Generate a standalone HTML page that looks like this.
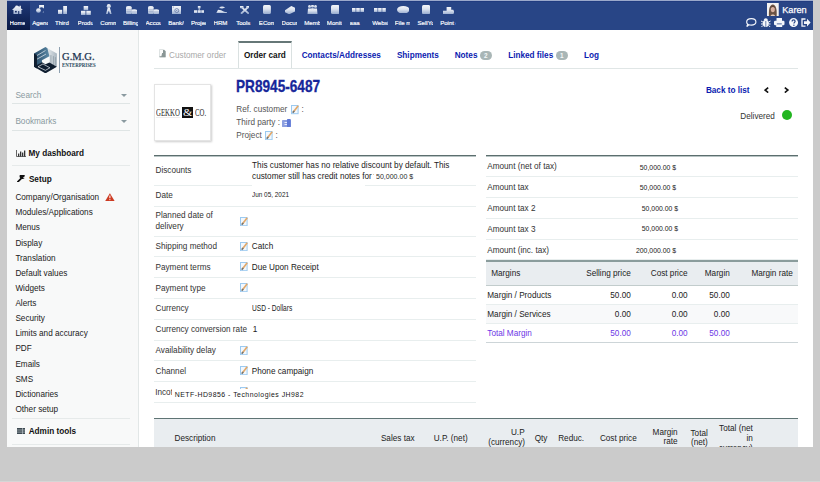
<!DOCTYPE html><html><head><meta charset="utf-8"><style>html,body{margin:0;padding:0;}body{width:820px;height:482px;background:#cbcbcb;position:relative;overflow:hidden;font-family:"Liberation Sans",sans-serif}div{box-sizing:border-box}</style></head><body>
<div style="position:absolute;left:7px;top:0px;width:806px;height:447px;background:#fff"></div>
<div style="position:absolute;left:7px;top:0px;width:806px;height:1px;background:#9ba9cb"></div>
<div style="position:absolute;left:7px;top:1px;width:806px;height:29px;background:#284586"></div>
<div style="position:absolute;left:7px;top:1px;width:806px;height:1px;background:#213c80"></div>
<div style="position:absolute;left:7px;top:1px;width:23px;height:29px;background:linear-gradient(to bottom,#203a7a 0%,#152a60 50%,#0a1a45 100%)"></div>
<div style="position:absolute;left:9.60px;top:19.0px;width:15.4px;height:8px;overflow:hidden;font:6.1px/7px 'Liberation Sans',sans-serif;color:#f4f6fb;-webkit-text-stroke:0.2px #f4f6fb;white-space:nowrap">Home</div>
<div style="position:absolute;left:32.26px;top:19.0px;width:15.4px;height:8px;overflow:hidden;font:6.1px/7px 'Liberation Sans',sans-serif;color:#f4f6fb;-webkit-text-stroke:0.2px #f4f6fb;white-space:nowrap">Agenda</div>
<div style="position:absolute;left:54.92px;top:19.0px;width:15.4px;height:8px;overflow:hidden;font:6.1px/7px 'Liberation Sans',sans-serif;color:#f4f6fb;-webkit-text-stroke:0.2px #f4f6fb;white-space:nowrap">Third parties</div>
<div style="position:absolute;left:77.58px;top:19.0px;width:15.4px;height:8px;overflow:hidden;font:6.1px/7px 'Liberation Sans',sans-serif;color:#f4f6fb;-webkit-text-stroke:0.2px #f4f6fb;white-space:nowrap">Products</div>
<div style="position:absolute;left:100.24px;top:19.0px;width:15.4px;height:8px;overflow:hidden;font:6.1px/7px 'Liberation Sans',sans-serif;color:#f4f6fb;-webkit-text-stroke:0.2px #f4f6fb;white-space:nowrap">Commercial</div>
<div style="position:absolute;left:122.90px;top:19.0px;width:15.4px;height:8px;overflow:hidden;font:6.1px/7px 'Liberation Sans',sans-serif;color:#f4f6fb;-webkit-text-stroke:0.2px #f4f6fb;white-space:nowrap">Billing</div>
<div style="position:absolute;left:145.56px;top:19.0px;width:15.4px;height:8px;overflow:hidden;font:6.1px/7px 'Liberation Sans',sans-serif;color:#f4f6fb;-webkit-text-stroke:0.2px #f4f6fb;white-space:nowrap">Accounting</div>
<div style="position:absolute;left:168.22px;top:19.0px;width:15.4px;height:8px;overflow:hidden;font:6.1px/7px 'Liberation Sans',sans-serif;color:#f4f6fb;-webkit-text-stroke:0.2px #f4f6fb;white-space:nowrap">Bank/Cash</div>
<div style="position:absolute;left:190.88px;top:19.0px;width:15.4px;height:8px;overflow:hidden;font:6.1px/7px 'Liberation Sans',sans-serif;color:#f4f6fb;-webkit-text-stroke:0.2px #f4f6fb;white-space:nowrap">Projects</div>
<div style="position:absolute;left:213.54px;top:19.0px;width:15.4px;height:8px;overflow:hidden;font:6.1px/7px 'Liberation Sans',sans-serif;color:#f4f6fb;-webkit-text-stroke:0.2px #f4f6fb;white-space:nowrap">HRM</div>
<div style="position:absolute;left:236.20px;top:19.0px;width:15.4px;height:8px;overflow:hidden;font:6.1px/7px 'Liberation Sans',sans-serif;color:#f4f6fb;-webkit-text-stroke:0.2px #f4f6fb;white-space:nowrap">Tools</div>
<div style="position:absolute;left:258.86px;top:19.0px;width:15.4px;height:8px;overflow:hidden;font:6.1px/7px 'Liberation Sans',sans-serif;color:#f4f6fb;-webkit-text-stroke:0.2px #f4f6fb;white-space:nowrap">ECommerce</div>
<div style="position:absolute;left:281.52px;top:19.0px;width:15.4px;height:8px;overflow:hidden;font:6.1px/7px 'Liberation Sans',sans-serif;color:#f4f6fb;-webkit-text-stroke:0.2px #f4f6fb;white-space:nowrap">Documents</div>
<div style="position:absolute;left:304.18px;top:19.0px;width:15.4px;height:8px;overflow:hidden;font:6.1px/7px 'Liberation Sans',sans-serif;color:#f4f6fb;-webkit-text-stroke:0.2px #f4f6fb;white-space:nowrap">Members</div>
<div style="position:absolute;left:326.84px;top:19.0px;width:15.4px;height:8px;overflow:hidden;font:6.1px/7px 'Liberation Sans',sans-serif;color:#f4f6fb;-webkit-text-stroke:0.2px #f4f6fb;white-space:nowrap">Monitoring</div>
<div style="position:absolute;left:349.50px;top:19.0px;width:15.4px;height:8px;overflow:hidden;font:6.1px/7px 'Liberation Sans',sans-serif;color:#f4f6fb;-webkit-text-stroke:0.2px #f4f6fb;white-space:nowrap">aaa</div>
<div style="position:absolute;left:372.16px;top:19.0px;width:15.4px;height:8px;overflow:hidden;font:6.1px/7px 'Liberation Sans',sans-serif;color:#f4f6fb;-webkit-text-stroke:0.2px #f4f6fb;white-space:nowrap">Websites</div>
<div style="position:absolute;left:394.82px;top:19.0px;width:15.4px;height:8px;overflow:hidden;font:6.1px/7px 'Liberation Sans',sans-serif;color:#f4f6fb;-webkit-text-stroke:0.2px #f4f6fb;white-space:nowrap">File manager</div>
<div style="position:absolute;left:417.48px;top:19.0px;width:15.4px;height:8px;overflow:hidden;font:6.1px/7px 'Liberation Sans',sans-serif;color:#f4f6fb;-webkit-text-stroke:0.2px #f4f6fb;white-space:nowrap">SellYourSaas</div>
<div style="position:absolute;left:440.14px;top:19.0px;width:15.4px;height:8px;overflow:hidden;font:6.1px/7px 'Liberation Sans',sans-serif;color:#f4f6fb;-webkit-text-stroke:0.2px #f4f6fb;white-space:nowrap">Point of sale</div>
<svg style="position:absolute;left:12.3px;top:4.7px;" width="10.90" height="9.80" viewBox="0 0 11 10" preserveAspectRatio="none"><defs><linearGradient id="g0" x1="0" y1="0" x2="0" y2="1"><stop offset="0" stop-color="#ffffff"/><stop offset="0.45" stop-color="#e4eaf4"/><stop offset="1" stop-color="#9cb0d2"/></linearGradient></defs><g fill="url(#g0)" opacity="0.95"><path d="M0 5 L3 2 L4 0.5 L6 0.8 L7.5 2 L7.5 0.8 L9 0.8 L9 3.3 L11 5 L9.5 5 L9.5 9.8 L7.3 9.8 L7.3 6 L6.3 6 L6.3 9.8 L1.5 9.8 L1.5 5 Z"/><rect x="3" y="6" width="1.8" height="1.6" fill="#1a2d66"/></g></svg>
<svg style="position:absolute;left:36.1px;top:5.1px;" width="8.20" height="7.90" viewBox="0 0 8 8" preserveAspectRatio="none"><defs><linearGradient id="g1" x1="0" y1="0" x2="0" y2="1"><stop offset="0" stop-color="#ffffff"/><stop offset="0.45" stop-color="#e4eaf4"/><stop offset="1" stop-color="#9cb0d2"/></linearGradient></defs><g fill="url(#g1)" opacity="0.95"><path d="M3 0 H8 V7.5 H4.5 A2.6 2.6 0 1 0 3 4 Z"/><circle cx="2.4" cy="5.5" r="2.3"/></g></svg>
<svg style="position:absolute;left:58.0px;top:5.5px;" width="9.40" height="8.60" viewBox="0 0 9 9" preserveAspectRatio="none"><defs><linearGradient id="g2" x1="0" y1="0" x2="0" y2="1"><stop offset="0" stop-color="#ffffff"/><stop offset="0.45" stop-color="#e4eaf4"/><stop offset="1" stop-color="#9cb0d2"/></linearGradient></defs><g fill="url(#g2)" opacity="0.95"><rect x="0" y="4" width="4" height="5"/><rect x="5" y="0" width="4" height="9"/></g></svg>
<svg style="position:absolute;left:81.0px;top:5.5px;" width="9.80" height="9.00" viewBox="0 0 10 9" preserveAspectRatio="none"><defs><linearGradient id="g3" x1="0" y1="0" x2="0" y2="1"><stop offset="0" stop-color="#ffffff"/><stop offset="0.45" stop-color="#e4eaf4"/><stop offset="1" stop-color="#9cb0d2"/></linearGradient></defs><g fill="url(#g3)" opacity="0.95"><rect x="2.7" y="0" width="4.6" height="4.2"/><rect x="0" y="4.8" width="4.6" height="4.2"/><rect x="5.4" y="4.8" width="4.6" height="4.2"/></g></svg>
<svg style="position:absolute;left:106.0px;top:4.0px;" width="5.60" height="10.50" viewBox="0 0 6 11" preserveAspectRatio="none"><defs><linearGradient id="g4" x1="0" y1="0" x2="0" y2="1"><stop offset="0" stop-color="#ffffff"/><stop offset="0.45" stop-color="#e4eaf4"/><stop offset="1" stop-color="#9cb0d2"/></linearGradient></defs><g fill="url(#g4)" opacity="0.95"><circle cx="3" cy="2.3" r="2.2"/><path d="M1.8 4 L0 10.5 L1.8 10.5 L3 7 L4.2 10.5 L6 10.5 L4.2 4 Z"/></g></svg>
<svg style="position:absolute;left:125.5px;top:6.2px;" width="11.20" height="8.30" viewBox="0 0 11 8" preserveAspectRatio="none"><defs><linearGradient id="g5" x1="0" y1="0" x2="0" y2="1"><stop offset="0" stop-color="#ffffff"/><stop offset="0.45" stop-color="#e4eaf4"/><stop offset="1" stop-color="#9cb0d2"/></linearGradient></defs><g fill="url(#g5)" opacity="0.95"><path d="M0 1.3 A2.8 1.3 0 0 1 5.6 1.3 V6.8 A2.8 1.2 0 0 1 0 6.8 Z"/><path d="M5.2 4.3 A2.9 1.2 0 0 1 11 4.3 V6.9 A2.9 1.1 0 0 1 5.2 6.9 Z"/><path d="M0.3 3.5 H5.3 M0.3 5.2 H5.3 M5.5 5.6 H10.7" stroke="#6f84b0" stroke-width="0.5" opacity="0.6"/></g></svg>
<svg style="position:absolute;left:147.8px;top:6.2px;" width="11.10" height="8.30" viewBox="0 0 11 8" preserveAspectRatio="none"><defs><linearGradient id="g6" x1="0" y1="0" x2="0" y2="1"><stop offset="0" stop-color="#ffffff"/><stop offset="0.45" stop-color="#e4eaf4"/><stop offset="1" stop-color="#9cb0d2"/></linearGradient></defs><g fill="url(#g6)" opacity="0.95"><path d="M0 1.3 A2.8 1.3 0 0 1 5.6 1.3 V6.8 A2.8 1.2 0 0 1 0 6.8 Z"/><path d="M5.2 4.3 A2.9 1.2 0 0 1 11 4.3 V6.9 A2.9 1.1 0 0 1 5.2 6.9 Z"/><path d="M0.3 3.5 H5.3 M0.3 5.2 H5.3 M5.5 5.6 H10.7" stroke="#6f84b0" stroke-width="0.5" opacity="0.6"/></g></svg>
<svg style="position:absolute;left:171.9px;top:5.5px;" width="9.30" height="8.30" viewBox="0 0 9 8" preserveAspectRatio="none"><defs><linearGradient id="g7" x1="0" y1="0" x2="0" y2="1"><stop offset="0" stop-color="#ffffff"/><stop offset="0.45" stop-color="#e4eaf4"/><stop offset="1" stop-color="#9cb0d2"/></linearGradient></defs><g fill="url(#g7)" opacity="0.95"><rect x="0" y="0" width="9" height="8"/><circle cx="4.6" cy="4.4" r="1.9" fill="none" stroke="#5a70a0" stroke-width="0.7"/><circle cx="4.6" cy="4.4" r="0.5" fill="#5a70a0"/><circle cx="1.2" cy="1" r="0.5" fill="#5a70a0"/></g></svg>
<svg style="position:absolute;left:193.6px;top:5.5px;" width="10.40" height="7.60" viewBox="0 0 10 8" preserveAspectRatio="none"><defs><linearGradient id="g8" x1="0" y1="0" x2="0" y2="1"><stop offset="0" stop-color="#ffffff"/><stop offset="0.45" stop-color="#e4eaf4"/><stop offset="1" stop-color="#9cb0d2"/></linearGradient></defs><g fill="url(#g8)" opacity="0.95"><rect x="3.7" y="0" width="2.6" height="2.6"/><rect x="4.5" y="2.5" width="1" height="2"/><rect x="0" y="4.5" width="3" height="3.5"/><rect x="3.5" y="4.5" width="3" height="3.5"/><rect x="7" y="4.5" width="3" height="3.5"/></g></svg>
<svg style="position:absolute;left:215.9px;top:5.5px;" width="11.10" height="7.60" viewBox="0 0 11 8" preserveAspectRatio="none"><defs><linearGradient id="g9" x1="0" y1="0" x2="0" y2="1"><stop offset="0" stop-color="#ffffff"/><stop offset="0.45" stop-color="#e4eaf4"/><stop offset="1" stop-color="#9cb0d2"/></linearGradient></defs><g fill="url(#g9)" opacity="0.95"><path d="M3 2 Q5.5 -0.5 9 1.5 L6 3 Z"/><path d="M2 4 L5 4.5 L8 6 L11 6.5 L11 8 L0 8 Z"/></g></svg>
<svg style="position:absolute;left:239.5px;top:5.5px;" width="9.80" height="8.30" viewBox="0 0 10 8" preserveAspectRatio="none"><defs><linearGradient id="g10" x1="0" y1="0" x2="0" y2="1"><stop offset="0" stop-color="#ffffff"/><stop offset="0.45" stop-color="#e4eaf4"/><stop offset="1" stop-color="#9cb0d2"/></linearGradient></defs><g fill="url(#g10)" opacity="0.95"><path d="M1 0.5 L9 7.5 M9 0.5 L1 7.5" stroke="url(#g10)" stroke-width="1.8"/><rect x="0" y="0" width="3.5" height="2.2"/><rect x="6.5" y="0" width="3.5" height="2.2"/></g></svg>
<svg style="position:absolute;left:263.2px;top:4.8px;" width="7.90" height="9.00" viewBox="0 0 8 9" preserveAspectRatio="none"><defs><linearGradient id="g11" x1="0" y1="0" x2="0" y2="1"><stop offset="0" stop-color="#ffffff"/><stop offset="0.45" stop-color="#e4eaf4"/><stop offset="1" stop-color="#9cb0d2"/></linearGradient></defs><g fill="url(#g11)" opacity="0.95"><rect x="0" y="0" width="8" height="9" rx="1.5"/></g></svg>
<svg style="position:absolute;left:284.7px;top:5.5px;" width="10.50" height="8.30" viewBox="0 0 10 8" preserveAspectRatio="none"><defs><linearGradient id="g12" x1="0" y1="0" x2="0" y2="1"><stop offset="0" stop-color="#ffffff"/><stop offset="0.45" stop-color="#e4eaf4"/><stop offset="1" stop-color="#9cb0d2"/></linearGradient></defs><g fill="url(#g12)" opacity="0.95"><path d="M0 4 L6 0 L10 2 L10 5 L4 8 L0 6 Z"/></g></svg>
<svg style="position:absolute;left:307.0px;top:4.8px;" width="11.00" height="9.00" viewBox="0 0 11 9" preserveAspectRatio="none"><defs><linearGradient id="g13" x1="0" y1="0" x2="0" y2="1"><stop offset="0" stop-color="#ffffff"/><stop offset="0.45" stop-color="#e4eaf4"/><stop offset="1" stop-color="#9cb0d2"/></linearGradient></defs><g fill="url(#g13)" opacity="0.95"><circle cx="2.5" cy="1.6" r="1.5"/><circle cx="5.5" cy="1.3" r="1.5"/><circle cx="8.5" cy="1.6" r="1.5"/><path d="M0.5 9 L1 3.5 H4 L4.5 9 Z M3.8 9 L4.2 3.2 H6.8 L7.2 9 Z M6.5 9 L7 3.5 H10 L10.5 9 Z"/></g></svg>
<svg style="position:absolute;left:330.6px;top:4.8px;" width="8.60" height="9.00" viewBox="0 0 8 9" preserveAspectRatio="none"><defs><linearGradient id="g14" x1="0" y1="0" x2="0" y2="1"><stop offset="0" stop-color="#ffffff"/><stop offset="0.45" stop-color="#e4eaf4"/><stop offset="1" stop-color="#9cb0d2"/></linearGradient></defs><g fill="url(#g14)" opacity="0.95"><rect x="0" y="0" width="8" height="9" rx="1.5"/></g></svg>
<svg style="position:absolute;left:351.7px;top:7.6px;" width="12.00" height="4.10" viewBox="0 0 12 4" preserveAspectRatio="none"><defs><linearGradient id="g15" x1="0" y1="0" x2="0" y2="1"><stop offset="0" stop-color="#ffffff"/><stop offset="0.45" stop-color="#e4eaf4"/><stop offset="1" stop-color="#9cb0d2"/></linearGradient></defs><g fill="url(#g15)" opacity="0.95"><rect x="0" y="0" width="3.6" height="4"/><rect x="4.2" y="0" width="3.6" height="4"/><rect x="8.4" y="0" width="3.6" height="4"/></g></svg>
<svg style="position:absolute;left:374.4px;top:7.6px;" width="11.80" height="4.10" viewBox="0 0 12 4" preserveAspectRatio="none"><defs><linearGradient id="g16" x1="0" y1="0" x2="0" y2="1"><stop offset="0" stop-color="#ffffff"/><stop offset="0.45" stop-color="#e4eaf4"/><stop offset="1" stop-color="#9cb0d2"/></linearGradient></defs><g fill="url(#g16)" opacity="0.95"><rect x="0" y="0" width="3.6" height="4"/><rect x="4.2" y="0" width="3.6" height="4"/><rect x="8.4" y="0" width="3.6" height="4"/></g></svg>
<svg style="position:absolute;left:396.7px;top:5.5px;" width="12.50" height="7.60" viewBox="0 0 12 8" preserveAspectRatio="none"><defs><linearGradient id="g17" x1="0" y1="0" x2="0" y2="1"><stop offset="0" stop-color="#ffffff"/><stop offset="0.45" stop-color="#e4eaf4"/><stop offset="1" stop-color="#9cb0d2"/></linearGradient></defs><g fill="url(#g17)" opacity="0.95"><ellipse cx="6" cy="4" rx="6" ry="4"/></g></svg>
<svg style="position:absolute;left:421.8px;top:4.9px;" width="8.10" height="9.20" viewBox="0 0 8 9" preserveAspectRatio="none"><defs><linearGradient id="g18" x1="0" y1="0" x2="0" y2="1"><stop offset="0" stop-color="#ffffff"/><stop offset="0.45" stop-color="#e4eaf4"/><stop offset="1" stop-color="#9cb0d2"/></linearGradient></defs><g fill="url(#g18)" opacity="0.95"><rect x="0" y="0" width="8" height="9" rx="1.5"/></g></svg>
<svg style="position:absolute;left:442.7px;top:6.8px;" width="11.30" height="7.60" viewBox="0 0 11 8" preserveAspectRatio="none"><defs><linearGradient id="g19" x1="0" y1="0" x2="0" y2="1"><stop offset="0" stop-color="#ffffff"/><stop offset="0.45" stop-color="#e4eaf4"/><stop offset="1" stop-color="#9cb0d2"/></linearGradient></defs><g fill="url(#g19)" opacity="0.95"><path d="M3.5 0 H8 V3 H10 L11 5 L10 8 H0 V4 H3.5 Z"/></g></svg>
<svg style="position:absolute;left:767.4px;top:2.7px;" width="11.50" height="13.30" viewBox="0 0 11.5 13.3" preserveAspectRatio="none"><rect width="11.5" height="13.3" fill="#efeae6"/><rect width="11.5" height="13.3" fill="#f4f2f0"/><path d="M2 13.3 C1.6 8 2 2 5.8 1.5 C9.6 2 10 8 9.6 13.3 Z" fill="#6a5244"/><ellipse cx="5.8" cy="6.4" rx="2" ry="2.8" fill="#d8b0a0"/><path d="M3.5 13.3 C4 11 7.6 11 8.2 13.3 Z" fill="#e2cabc"/><path d="M3.6 5 C3.8 2.8 7.8 2.8 8 5 C6.8 3.8 4.8 3.8 3.6 5 Z" fill="#4a3428"/></svg>
<div style="position:absolute;left:782.20px;top:5.00px;font:normal 9.2px/10px 'Liberation Sans',sans-serif;color:#ffffff;white-space:nowrap;transform-origin:0 0;-webkit-text-stroke:0.25px #fff">Karen</div>
<svg style="position:absolute;left:746.4px;top:17.8px;" width="10.60" height="9.20" viewBox="0 0 11 9.2" preserveAspectRatio="none"><path d="M5.5 0.7 C8.6 0.7 10.3 2.3 10.3 4 C10.3 5.8 8.4 7.2 5.6 7.2 C4.6 7.2 3.6 7 3 6.8 L0.8 8.6 L1.8 6.2 C1 5.6 0.7 4.8 0.7 4 C0.7 2.3 2.5 0.7 5.5 0.7 Z" fill="none" stroke="#f4f6fb" stroke-width="1.2"/></svg>
<svg style="position:absolute;left:761px;top:17.8px;" width="9.60" height="9.20" viewBox="0 0 10 9.2" preserveAspectRatio="none"><g fill="#f4f6fb"><ellipse cx="5" cy="5.6" rx="3.2" ry="3.5"/><ellipse cx="5" cy="1.8" rx="2" ry="1.5"/><path d="M0 3 L2 4 M0 6 L2 6 M0.5 9 L2 7.5 M10 3 L8 4 M10 6 L8 6 M9.5 9 L8 7.5" stroke="#f4f6fb" stroke-width="1"/></g><path d="M5 3 V9" stroke="#284586" stroke-width="0.7"/></svg>
<svg style="position:absolute;left:774.3px;top:17.8px;" width="10.50" height="9.20" viewBox="0 0 10.5 9.2" preserveAspectRatio="none"><g fill="#f4f6fb"><rect x="2.5" y="0" width="5.5" height="3" rx="0.3"/><rect x="0" y="2.8" width="10.5" height="4.5" rx="1.2"/><rect x="2.2" y="6" width="6" height="3.2"/></g><rect x="2.8" y="5.5" width="5" height="0.8" fill="#284586"/></svg>
<svg style="position:absolute;left:788.5px;top:17.8px;" width="9.10" height="9.20" viewBox="0 0 9.1 9.2" preserveAspectRatio="none"><circle cx="4.55" cy="4.6" r="4.5" fill="#f4f6fb"/><path d="M3.1 3.4 C3.1 2.3 3.8 1.8 4.6 1.8 C5.5 1.8 6.1 2.4 6.1 3.2 C6.1 4.3 4.9 4.4 4.9 5.6" fill="none" stroke="#284586" stroke-width="1.2"/><circle cx="4.9" cy="7.2" r="0.7" fill="#284586"/></svg>
<svg style="position:absolute;left:801.3px;top:17.8px;" width="9.70" height="9.20" viewBox="0 0 9.7 9.2" preserveAspectRatio="none"><path d="M4.5 1 H1 V8.2 H4.5" fill="none" stroke="#f4f6fb" stroke-width="1.3"/><path d="M3 3.3 H6 V0.8 L9.6 4.6 L6 8.4 V5.9 H3 Z" fill="#f4f6fb"/></svg>
<div style="position:absolute;left:7px;top:30px;width:132px;height:417px;background:#f8f9f9;border-right:1px solid #e2e7e7"></div>
<svg style="position:absolute;left:34.3px;top:46.8px;" width="22.90" height="26.40" viewBox="0 0 23 26" preserveAspectRatio="none"><defs><linearGradient id="lg" x1="0" y1="0" x2="1" y2="0"><stop offset="0" stop-color="#e4e9ec"/><stop offset="1" stop-color="#a9b6c0"/></linearGradient><linearGradient id="lt" x1="0" y1="0" x2="1" y2="0"><stop offset="0" stop-color="#244866"/><stop offset="1" stop-color="#5d8aa6"/></linearGradient></defs><path d="M13.5 1.2 L23 6.5 L23 19.5 L15.5 15.3 L15.5 9 Z" fill="url(#lg)"/><path d="M17 8 V17 M19.5 9 V18 M21.5 10 V18.5" stroke="#8e9ea8" stroke-width="0.8"/><path d="M0 6.5 L11.5 0 L13.5 1.2 L15.5 9 L8 13 L8 19 L0 19.5 Z" fill="url(#lt)"/><path d="M0 19.5 L8 15 L11.5 17 L15.5 15.3 L23 19.5 L11.5 26 Z" fill="#0f1e30"/><path d="M2 9 L11.5 3.5 M3 12 L12 7 M2.5 8 V17" stroke="#e8eef2" stroke-width="0.7" fill="none"/><path d="M4 19.5 L9 16.7 L16 20.5 L11.5 23 Z" fill="none" stroke="#e8eef2" stroke-width="0.7"/><path d="M0 6.5 L0 19.5 L3 21.2 L3 8.2 Z" fill="#0f1e30"/></svg>
<div style="position:absolute;left:59.2px;top:46.8px;width:0.9px;height:26.4px;background:#8ea0b0"></div>
<div style="position:absolute;left:62.30px;top:51.20px;font:normal 10.5px/12px 'Liberation Serif',serif;color:#1b3350;white-space:nowrap;transform-origin:0 0;transform:scaleX(1.0080);-webkit-text-stroke:0.25px #1b3350">G.M.G.</div>
<div style="position:absolute;left:62.30px;top:61.60px;font:bold 5.1px/6px 'Liberation Serif',serif;color:#2a4a60;white-space:nowrap;transform-origin:0 0;transform:scaleX(0.9558);">ENTERPRISES</div>
<div style="position:absolute;left:15.40px;top:91.00px;font:normal 8.2px/9px 'Liberation Sans',sans-serif;color:#8a9aa0;white-space:nowrap;transform-origin:0 0;">Search</div>
<div style="position:absolute;left:15.40px;top:117.00px;font:normal 8.2px/9px 'Liberation Sans',sans-serif;color:#8a9aa0;white-space:nowrap;transform-origin:0 0;">Bookmarks</div>
<div style="position:absolute;left:12px;top:103px;width:118px;height:1px;background:#dfe5e5"></div>
<div style="position:absolute;left:12px;top:130px;width:118px;height:1px;background:#dfe5e5"></div>
<div style="position:absolute;left:120.5px;top:94px;width:0;height:0;border-left:3px solid transparent;border-right:3px solid transparent;border-top:3.5px solid #8a9aa0"></div>
<div style="position:absolute;left:120.5px;top:120px;width:0;height:0;border-left:3px solid transparent;border-right:3px solid transparent;border-top:3.5px solid #8a9aa0"></div>
<div style="position:absolute;left:28.50px;top:149.40px;font:bold 8.2px/9px 'Liberation Sans',sans-serif;color:#111;white-space:nowrap;transform-origin:0 0;">My dashboard</div>
<svg style="position:absolute;left:15.7px;top:149.5px;" width="10.00" height="7.10" viewBox="0 0 10 7" preserveAspectRatio="none"><path d="M0.5 0 V6.5 H10" fill="none" stroke="#555" stroke-width="0.9"/><rect x="2" y="3.5" width="1.3" height="3" fill="#333"/><rect x="4" y="1.5" width="1.3" height="5" fill="#333"/><rect x="6" y="2.5" width="1.3" height="4" fill="#333"/><rect x="8" y="0.5" width="1.3" height="6" fill="#333"/></svg>
<div style="position:absolute;left:12px;top:165px;width:118px;height:1px;background:#e6eaea"></div>
<div style="position:absolute;left:28.90px;top:174.70px;font:bold 8.2px/9px 'Liberation Sans',sans-serif;color:#111;white-space:nowrap;transform-origin:0 0;">Setup</div>
<svg style="position:absolute;left:17px;top:174.5px;" width="8.30" height="7.50" viewBox="0 0 8.3 7.5" preserveAspectRatio="none"><path d="M0.8 6.8 L4.5 3.2" stroke="#111" stroke-width="1.8" stroke-linecap="round"/><path d="M4 3.5 A2.6 2.6 0 1 1 7.8 1.2 L6.2 2.6 L6.6 3.4 L7.6 3.0 L8.2 1.8 A2.6 2.6 0 0 1 4 3.5 Z" fill="#111"/></svg>
<div style="position:absolute;left:15.40px;top:193.20px;font:normal 8.2px/9px 'Liberation Sans',sans-serif;color:#1a1a1a;white-space:nowrap;transform-origin:0 0;">Company/Organisation</div>
<div style="position:absolute;left:15.40px;top:208.32px;font:normal 8.2px/9px 'Liberation Sans',sans-serif;color:#1a1a1a;white-space:nowrap;transform-origin:0 0;">Modules/Applications</div>
<div style="position:absolute;left:15.40px;top:223.44px;font:normal 8.2px/9px 'Liberation Sans',sans-serif;color:#1a1a1a;white-space:nowrap;transform-origin:0 0;">Menus</div>
<div style="position:absolute;left:15.40px;top:238.56px;font:normal 8.2px/9px 'Liberation Sans',sans-serif;color:#1a1a1a;white-space:nowrap;transform-origin:0 0;">Display</div>
<div style="position:absolute;left:15.40px;top:253.68px;font:normal 8.2px/9px 'Liberation Sans',sans-serif;color:#1a1a1a;white-space:nowrap;transform-origin:0 0;">Translation</div>
<div style="position:absolute;left:15.40px;top:268.80px;font:normal 8.2px/9px 'Liberation Sans',sans-serif;color:#1a1a1a;white-space:nowrap;transform-origin:0 0;">Default values</div>
<div style="position:absolute;left:15.40px;top:283.92px;font:normal 8.2px/9px 'Liberation Sans',sans-serif;color:#1a1a1a;white-space:nowrap;transform-origin:0 0;">Widgets</div>
<div style="position:absolute;left:15.40px;top:299.04px;font:normal 8.2px/9px 'Liberation Sans',sans-serif;color:#1a1a1a;white-space:nowrap;transform-origin:0 0;">Alerts</div>
<div style="position:absolute;left:15.40px;top:314.16px;font:normal 8.2px/9px 'Liberation Sans',sans-serif;color:#1a1a1a;white-space:nowrap;transform-origin:0 0;">Security</div>
<div style="position:absolute;left:15.40px;top:329.28px;font:normal 8.2px/9px 'Liberation Sans',sans-serif;color:#1a1a1a;white-space:nowrap;transform-origin:0 0;">Limits and accuracy</div>
<div style="position:absolute;left:15.40px;top:344.40px;font:normal 8.2px/9px 'Liberation Sans',sans-serif;color:#1a1a1a;white-space:nowrap;transform-origin:0 0;">PDF</div>
<div style="position:absolute;left:15.40px;top:359.52px;font:normal 8.2px/9px 'Liberation Sans',sans-serif;color:#1a1a1a;white-space:nowrap;transform-origin:0 0;">Emails</div>
<div style="position:absolute;left:15.40px;top:374.64px;font:normal 8.2px/9px 'Liberation Sans',sans-serif;color:#1a1a1a;white-space:nowrap;transform-origin:0 0;">SMS</div>
<div style="position:absolute;left:15.40px;top:389.76px;font:normal 8.2px/9px 'Liberation Sans',sans-serif;color:#1a1a1a;white-space:nowrap;transform-origin:0 0;">Dictionaries</div>
<div style="position:absolute;left:15.40px;top:404.88px;font:normal 8.2px/9px 'Liberation Sans',sans-serif;color:#1a1a1a;white-space:nowrap;transform-origin:0 0;">Other setup</div>
<svg style="position:absolute;left:104.8px;top:192.6px;" width="9.80" height="8.00" viewBox="0 0 10 8.4" preserveAspectRatio="none"><path d="M5 0.3 L9.8 8.3 H0.2 Z" fill="#cc3a22"/><path d="M5 2.6 V5.6" stroke="#fff" stroke-width="1.1"/><circle cx="5" cy="6.9" r="0.6" fill="#fff"/></svg>
<div style="position:absolute;left:12px;top:418px;width:118px;height:1px;background:#e6eaea"></div>
<div style="position:absolute;left:28.70px;top:427.30px;font:bold 8.2px/9px 'Liberation Sans',sans-serif;color:#111;white-space:nowrap;transform-origin:0 0;">Admin tools</div>
<svg style="position:absolute;left:16.8px;top:428.3px;" width="8.30" height="6.10" viewBox="0 0 8.3 6.1" preserveAspectRatio="none"><rect width="8.3" height="6.1" fill="#3d4a52"/><path d="M0 2 H8.3 M0 4.1 H8.3 M5.5 0 V6.1" stroke="#c8d0d4" stroke-width="0.6"/></svg>
<div style="position:absolute;left:12px;top:444px;width:118px;height:1px;background:#e6eaea"></div>
<div style="position:absolute;left:169.10px;top:51.00px;font:normal 8.2px/9px 'Liberation Sans',sans-serif;color:#a8a8a8;white-space:nowrap;transform-origin:0 0;">Customer order</div>
<svg style="position:absolute;left:159px;top:49.3px;" width="7.00" height="8.50" viewBox="0 0 7 8.5" preserveAspectRatio="none"><path d="M0.5 0.5 H4.5 L6.5 2 V8 H0.5 Z" fill="#fafafa" stroke="#d6dcdc" stroke-width="0.8"/><path d="M4 1 H5.3 L6.6 2.2 V8.2 H0.6 V7.3 H2.4 L3.1 4 H4 Z" fill="#8a9696"/></svg>
<div style="position:absolute;left:238px;top:41px;width:54px;height:28px;background:#fff;border:1px solid #dae1e1;border-top:2px solid #667777;border-bottom:none"></div>
<div style="position:absolute;left:244.00px;top:51.00px;font:bold 8.2px/9px 'Liberation Sans',sans-serif;color:#111;white-space:nowrap;transform-origin:0 0;">Order card</div>
<div style="position:absolute;left:301.70px;top:51.00px;font:bold 8.2px/9px 'Liberation Sans',sans-serif;color:#0b1cb0;white-space:nowrap;transform-origin:0 0;">Contacts/Addresses</div>
<div style="position:absolute;left:396.90px;top:51.00px;font:bold 8.2px/9px 'Liberation Sans',sans-serif;color:#0b1cb0;white-space:nowrap;transform-origin:0 0;">Shipments</div>
<div style="position:absolute;left:454.70px;top:51.00px;font:bold 8.2px/9px 'Liberation Sans',sans-serif;color:#0b1cb0;white-space:nowrap;transform-origin:0 0;">Notes</div>
<div style="position:absolute;left:480px;top:50.8px;width:12.4px;height:9.1px;background:#a9b6b6;border-radius:4.5px"></div>
<div style="position:absolute;left:483.90px;top:51.60px;font:bold 6.4px/7px 'Liberation Sans',sans-serif;color:#f4f8f8;white-space:nowrap;transform-origin:0 0;">2</div>
<div style="position:absolute;left:508.20px;top:51.00px;font:bold 8.2px/9px 'Liberation Sans',sans-serif;color:#0b1cb0;white-space:nowrap;transform-origin:0 0;">Linked files</div>
<div style="position:absolute;left:555.8px;top:50.8px;width:12.4px;height:9.1px;background:#a9b6b6;border-radius:4.5px"></div>
<div style="position:absolute;left:560.10px;top:51.60px;font:bold 6.4px/7px 'Liberation Sans',sans-serif;color:#f4f8f8;white-space:nowrap;transform-origin:0 0;">1</div>
<div style="position:absolute;left:583.90px;top:51.00px;font:bold 8.2px/9px 'Liberation Sans',sans-serif;color:#0b1cb0;white-space:nowrap;transform-origin:0 0;">Log</div>
<div style="position:absolute;left:154px;top:68px;width:644px;height:1px;background:#e0e6e6"></div>
<div style="position:absolute;left:154px;top:84px;width:57px;height:57px;background:#fff;border:1px solid #e4e4e4;box-shadow:1px 1px 2px #ccc"></div>
<div style="position:absolute;left:155.70px;top:106.70px;font:normal 9.8px/11px 'Liberation Serif',serif;color:#2a2a2a;white-space:nowrap;transform-origin:0 0;transform:scaleX(0.6942);">GEKKO</div>
<div style="position:absolute;left:182px;top:107px;width:11px;height:11px;background:#111"></div>
<div style="position:absolute;left:183.30px;top:106.60px;font:normal 10.5px/12px 'Liberation Serif',serif;color:#fff;white-space:nowrap;transform-origin:0 0;transform:scaleX(1.1423);">&amp;</div>
<div style="position:absolute;left:194.50px;top:106.70px;font:normal 9.8px/11px 'Liberation Serif',serif;color:#2a2a2a;white-space:nowrap;transform-origin:0 0;transform:scaleX(0.6944);">CO.</div>
<div style="position:absolute;left:156px;top:117px;width:24px;height:1px;background:#eee"></div>
<div style="position:absolute;left:236.40px;top:77.10px;font:bold 16.3px/18px 'Liberation Sans',sans-serif;color:#16269a;white-space:nowrap;transform-origin:0 0;transform:scaleX(0.8371);-webkit-text-stroke:0.3px #16269a">PR8945-6487</div>
<div style="position:absolute;left:236.30px;top:104.90px;font:normal 8.2px/9px 'Liberation Sans',sans-serif;color:#555;white-space:nowrap;transform-origin:0 0;">Ref. customer</div>
<svg style="position:absolute;left:291px;top:105.4px;" width="7.60" height="9.20" viewBox="0 0 7.6 9.2" preserveAspectRatio="none"><rect x="0.5" y="0.5" width="6.6" height="8.2" fill="#f2f8fe" stroke="#9ccaf0" stroke-width="1"/><path d="M7.2 0.8 L2.2 7.2" stroke="#e2a86a" stroke-width="1.7"/><path d="M3.2 5.9 L1.7 7.8" stroke="#6a7478" stroke-width="1.5"/></svg>
<div style="position:absolute;left:301.40px;top:104.90px;font:normal 8.2px/9px 'Liberation Sans',sans-serif;color:#555;white-space:nowrap;transform-origin:0 0;">:</div>
<div style="position:absolute;left:236.30px;top:117.80px;font:normal 8.2px/9px 'Liberation Sans',sans-serif;color:#555;white-space:nowrap;transform-origin:0 0;">Third party :</div>
<svg style="position:absolute;left:282px;top:118.7px;" width="8.80" height="8.10" viewBox="0 0 8.8 8.1" preserveAspectRatio="none"><rect x="0" y="1" width="8.8" height="7.1" rx="0.8" fill="#8c9fe0"/><rect x="5" y="0" width="3.8" height="8.1" rx="0.8" fill="#5f79d6"/><rect x="2.5" y="3" width="2.5" height="1" fill="#e8ecff"/><rect x="2.5" y="5" width="2.5" height="1" fill="#e8ecff"/></svg>
<div style="position:absolute;left:236.30px;top:131.00px;font:normal 8.2px/9px 'Liberation Sans',sans-serif;color:#555;white-space:nowrap;transform-origin:0 0;">Project</div>
<svg style="position:absolute;left:265px;top:130.8px;" width="7.60" height="9.20" viewBox="0 0 7.6 9.2" preserveAspectRatio="none"><rect x="0.5" y="0.5" width="6.6" height="8.2" fill="#f2f8fe" stroke="#9ccaf0" stroke-width="1"/><path d="M7.2 0.8 L2.2 7.2" stroke="#e2a86a" stroke-width="1.7"/><path d="M3.2 5.9 L1.7 7.8" stroke="#6a7478" stroke-width="1.5"/></svg>
<div style="position:absolute;left:275.60px;top:131.00px;font:normal 8.2px/9px 'Liberation Sans',sans-serif;color:#555;white-space:nowrap;transform-origin:0 0;">:</div>
<div style="position:absolute;left:749.30px;top:85.60px;width:0;height:9px"><div style="position:absolute;right:-0.3px;top:0;font:bold 8.2px/9px 'Liberation Sans',sans-serif;color:#0b1cb0;white-space:nowrap;transform-origin:100% 0;">Back to list</div></div>
<svg style="position:absolute;left:764px;top:86.7px;" width="5.00" height="6.20" viewBox="0 0 5 6.2" preserveAspectRatio="none"><path d="M4.2 0.6 L1.2 3.1 L4.2 5.6" fill="none" stroke="#111" stroke-width="1.6"/></svg>
<svg style="position:absolute;left:784.4px;top:86.7px;" width="5.20" height="6.20" viewBox="0 0 5.2 6.2" preserveAspectRatio="none"><path d="M0.8 0.6 L3.9 3.1 L0.8 5.6" fill="none" stroke="#111" stroke-width="1.6"/></svg>
<div style="position:absolute;left:774.60px;top:111.60px;width:0;height:9px"><div style="position:absolute;right:-0.3px;top:0;font:normal 8.2px/9px 'Liberation Sans',sans-serif;color:#333;white-space:nowrap;transform-origin:100% 0;">Delivered</div></div>
<div style="position:absolute;left:782px;top:110px;width:10px;height:10px;background:#22b520;border-radius:50%"></div>
<div style="position:absolute;left:154px;top:155px;width:322px;height:1px;background:#5c6e6e"></div>
<div style="position:absolute;left:154px;top:156px;width:322px;height:1px;background:#b8c4c4"></div>
<div style="position:absolute;left:154px;top:185px;width:322px;height:1px;background:#e8eeee"></div>
<div style="position:absolute;left:154px;top:206px;width:322px;height:1px;background:#e8eeee"></div>
<div style="position:absolute;left:154px;top:236px;width:322px;height:1px;background:#e8eeee"></div>
<div style="position:absolute;left:154px;top:256px;width:322px;height:1px;background:#e8eeee"></div>
<div style="position:absolute;left:154px;top:277px;width:322px;height:1px;background:#e8eeee"></div>
<div style="position:absolute;left:154px;top:298px;width:322px;height:1px;background:#e8eeee"></div>
<div style="position:absolute;left:154px;top:319px;width:322px;height:1px;background:#e8eeee"></div>
<div style="position:absolute;left:154px;top:340px;width:322px;height:1px;background:#e8eeee"></div>
<div style="position:absolute;left:154px;top:360px;width:322px;height:1px;background:#e8eeee"></div>
<div style="position:absolute;left:154px;top:381px;width:322px;height:1px;background:#e8eeee"></div>
<div style="position:absolute;left:154px;top:402px;width:322px;height:1px;background:#e8eeee"></div>
<div style="position:absolute;left:252px;top:184px;width:113px;height:3px;background:#fff"></div>
<div style="position:absolute;left:155.50px;top:166.20px;font:normal 8.2px/9px 'Liberation Sans',sans-serif;color:#333;white-space:nowrap;transform-origin:0 0;">Discounts</div>
<div style="position:absolute;left:252.10px;top:160.80px;font:normal 8.2px/9px 'Liberation Sans',sans-serif;color:#222;white-space:nowrap;transform-origin:0 0;">This customer has no relative discount by default. This</div>
<div style="position:absolute;left:252.10px;top:171.80px;font:normal 8.2px/9px 'Liberation Sans',sans-serif;color:#222;white-space:nowrap;transform-origin:0 0;">customer still has credit notes for</div>
<div style="position:absolute;left:373.3px;top:173.6px;width:0.9px;height:1.8px;background:#e0c8a8"></div>
<div style="position:absolute;left:376.40px;top:171.80px;font:normal 7.6px/9px 'Liberation Sans',sans-serif;color:#2a2a2a;white-space:nowrap;transform-origin:0 0;transform:scaleX(0.9265);">50,000.00 $</div>
<div style="position:absolute;left:155.50px;top:191.10px;font:normal 8.2px/9px 'Liberation Sans',sans-serif;color:#333;white-space:nowrap;transform-origin:0 0;">Date</div>
<div style="position:absolute;left:251.80px;top:189.80px;font:normal 7.4px/9px 'Liberation Sans',sans-serif;color:#222;white-space:nowrap;transform-origin:0 0;transform:scaleX(0.8669);">Jun 05, 2021</div>
<div style="position:absolute;left:155.50px;top:210.90px;font:normal 8.2px/9px 'Liberation Sans',sans-serif;color:#333;white-space:nowrap;transform-origin:0 0;">Planned date of</div>
<div style="position:absolute;left:155.50px;top:222.30px;font:normal 8.2px/9px 'Liberation Sans',sans-serif;color:#333;white-space:nowrap;transform-origin:0 0;">delivery</div>
<div style="position:absolute;left:155.50px;top:242.00px;font:normal 8.2px/9px 'Liberation Sans',sans-serif;color:#333;white-space:nowrap;transform-origin:0 0;">Shipping method</div>
<div style="position:absolute;left:155.50px;top:262.70px;font:normal 8.2px/9px 'Liberation Sans',sans-serif;color:#333;white-space:nowrap;transform-origin:0 0;">Payment terms</div>
<div style="position:absolute;left:155.50px;top:283.70px;font:normal 8.2px/9px 'Liberation Sans',sans-serif;color:#333;white-space:nowrap;transform-origin:0 0;">Payment type</div>
<div style="position:absolute;left:155.50px;top:304.20px;font:normal 8.2px/9px 'Liberation Sans',sans-serif;color:#333;white-space:nowrap;transform-origin:0 0;">Currency</div>
<div style="position:absolute;left:155.50px;top:325.00px;font:normal 8.2px/9px 'Liberation Sans',sans-serif;color:#333;white-space:nowrap;transform-origin:0 0;">Currency conversion rate</div>
<div style="position:absolute;left:155.50px;top:346.00px;font:normal 8.2px/9px 'Liberation Sans',sans-serif;color:#333;white-space:nowrap;transform-origin:0 0;">Availability delay</div>
<div style="position:absolute;left:155.50px;top:366.80px;font:normal 8.2px/9px 'Liberation Sans',sans-serif;color:#333;white-space:nowrap;transform-origin:0 0;">Channel</div>
<div style="position:absolute;left:155.20px;top:387.60px;font:normal 8.2px/9px 'Liberation Sans',sans-serif;color:#333;white-space:nowrap;transform-origin:0 0;">Incoterms</div>
<svg style="position:absolute;left:240px;top:216.5px;" width="7.60" height="9.20" viewBox="0 0 7.6 9.2" preserveAspectRatio="none"><rect x="0.5" y="0.5" width="6.6" height="8.2" fill="#f2f8fe" stroke="#9ccaf0" stroke-width="1"/><path d="M7.2 0.8 L2.2 7.2" stroke="#e2a86a" stroke-width="1.7"/><path d="M3.2 5.9 L1.7 7.8" stroke="#6a7478" stroke-width="1.5"/></svg>
<svg style="position:absolute;left:240px;top:241.8px;" width="7.60" height="9.20" viewBox="0 0 7.6 9.2" preserveAspectRatio="none"><rect x="0.5" y="0.5" width="6.6" height="8.2" fill="#f2f8fe" stroke="#9ccaf0" stroke-width="1"/><path d="M7.2 0.8 L2.2 7.2" stroke="#e2a86a" stroke-width="1.7"/><path d="M3.2 5.9 L1.7 7.8" stroke="#6a7478" stroke-width="1.5"/></svg>
<svg style="position:absolute;left:240px;top:262.2px;" width="7.60" height="9.20" viewBox="0 0 7.6 9.2" preserveAspectRatio="none"><rect x="0.5" y="0.5" width="6.6" height="8.2" fill="#f2f8fe" stroke="#9ccaf0" stroke-width="1"/><path d="M7.2 0.8 L2.2 7.2" stroke="#e2a86a" stroke-width="1.7"/><path d="M3.2 5.9 L1.7 7.8" stroke="#6a7478" stroke-width="1.5"/></svg>
<svg style="position:absolute;left:240px;top:283px;" width="7.60" height="9.20" viewBox="0 0 7.6 9.2" preserveAspectRatio="none"><rect x="0.5" y="0.5" width="6.6" height="8.2" fill="#f2f8fe" stroke="#9ccaf0" stroke-width="1"/><path d="M7.2 0.8 L2.2 7.2" stroke="#e2a86a" stroke-width="1.7"/><path d="M3.2 5.9 L1.7 7.8" stroke="#6a7478" stroke-width="1.5"/></svg>
<svg style="position:absolute;left:240px;top:345.5px;" width="7.60" height="9.20" viewBox="0 0 7.6 9.2" preserveAspectRatio="none"><rect x="0.5" y="0.5" width="6.6" height="8.2" fill="#f2f8fe" stroke="#9ccaf0" stroke-width="1"/><path d="M7.2 0.8 L2.2 7.2" stroke="#e2a86a" stroke-width="1.7"/><path d="M3.2 5.9 L1.7 7.8" stroke="#6a7478" stroke-width="1.5"/></svg>
<svg style="position:absolute;left:240px;top:366.2px;" width="7.60" height="9.20" viewBox="0 0 7.6 9.2" preserveAspectRatio="none"><rect x="0.5" y="0.5" width="6.6" height="8.2" fill="#f2f8fe" stroke="#9ccaf0" stroke-width="1"/><path d="M7.2 0.8 L2.2 7.2" stroke="#e2a86a" stroke-width="1.7"/><path d="M3.2 5.9 L1.7 7.8" stroke="#6a7478" stroke-width="1.5"/></svg>
<div style="position:absolute;left:251.80px;top:242.00px;font:normal 8.2px/9px 'Liberation Sans',sans-serif;color:#222;white-space:nowrap;transform-origin:0 0;">Catch</div>
<div style="position:absolute;left:251.80px;top:262.70px;font:normal 8.2px/9px 'Liberation Sans',sans-serif;color:#222;white-space:nowrap;transform-origin:0 0;">Due Upon Receipt</div>
<div style="position:absolute;left:251.50px;top:302.80px;font:normal 8.6px/10px 'Liberation Sans',sans-serif;color:#222;white-space:nowrap;transform-origin:0 0;transform:scaleX(0.7667);">USD - Dollars</div>
<div style="position:absolute;left:252.80px;top:325.00px;font:normal 8.2px/9px 'Liberation Sans',sans-serif;color:#222;white-space:nowrap;transform-origin:0 0;">1</div>
<div style="position:absolute;left:251.80px;top:366.80px;font:normal 8.2px/9px 'Liberation Sans',sans-serif;color:#222;white-space:nowrap;transform-origin:0 0;">Phone campaign</div>
<svg style="position:absolute;left:240px;top:386.5px;" width="7.60" height="9.20" viewBox="0 0 7.6 9.2" preserveAspectRatio="none"><rect x="0.5" y="0.5" width="6.6" height="8.2" fill="#f2f8fe" stroke="#9ccaf0" stroke-width="1"/><path d="M7.2 0.8 L2.2 7.2" stroke="#e2a86a" stroke-width="1.7"/><path d="M3.2 5.9 L1.7 7.8" stroke="#6a7478" stroke-width="1.5"/></svg>
<div style="position:absolute;left:172px;top:389px;width:134px;height:11px;background:#fff"></div>
<div style="position:absolute;left:174.70px;top:390.80px;font:normal 6.9px/7px 'Liberation Sans',sans-serif;color:#151515;white-space:nowrap;transform-origin:0 0;letter-spacing:0.491px">NETF-HD9856 - Technologies JH982</div>
<div style="position:absolute;left:486px;top:155px;width:312px;height:1px;background:#5c6e6e"></div>
<div style="position:absolute;left:486px;top:156px;width:312px;height:1px;background:#b8c4c4"></div>
<div style="position:absolute;left:486px;top:176px;width:312px;height:1px;background:#e8eeee"></div>
<div style="position:absolute;left:486px;top:197px;width:312px;height:1px;background:#e8eeee"></div>
<div style="position:absolute;left:486px;top:218px;width:312px;height:1px;background:#e8eeee"></div>
<div style="position:absolute;left:486px;top:239px;width:312px;height:1px;background:#e8eeee"></div>
<div style="position:absolute;left:486px;top:259px;width:312px;height:1px;background:#e8eeee"></div>
<div style="position:absolute;left:487.20px;top:162.30px;font:normal 8.2px/9px 'Liberation Sans',sans-serif;color:#333;white-space:nowrap;transform-origin:0 0;">Amount (net of tax)</div>
<div style="position:absolute;left:676.10px;top:162.60px;width:0;height:9px"><div style="position:absolute;right:-0.3px;top:0;font:normal 7.4px/9px 'Liberation Sans',sans-serif;color:#222;white-space:nowrap;transform-origin:100% 0;transform:scaleX(0.9285);">50,000.00 $</div></div>
<div style="position:absolute;left:487.20px;top:182.70px;font:normal 8.2px/9px 'Liberation Sans',sans-serif;color:#333;white-space:nowrap;transform-origin:0 0;">Amount tax</div>
<div style="position:absolute;left:676.10px;top:182.90px;width:0;height:9px"><div style="position:absolute;right:-0.3px;top:0;font:normal 7.4px/9px 'Liberation Sans',sans-serif;color:#222;white-space:nowrap;transform-origin:100% 0;transform:scaleX(0.9285);">50,000.00 $</div></div>
<div style="position:absolute;left:487.20px;top:203.60px;font:normal 8.2px/9px 'Liberation Sans',sans-serif;color:#333;white-space:nowrap;transform-origin:0 0;">Amount tax 2</div>
<div style="position:absolute;left:678.00px;top:203.60px;width:0;height:9px"><div style="position:absolute;right:-0.3px;top:0;font:normal 7.4px/9px 'Liberation Sans',sans-serif;color:#222;white-space:nowrap;transform-origin:100% 0;transform:scaleX(0.9285);">50,000.00 $</div></div>
<div style="position:absolute;left:487.20px;top:224.60px;font:normal 8.2px/9px 'Liberation Sans',sans-serif;color:#333;white-space:nowrap;transform-origin:0 0;">Amount tax 3</div>
<div style="position:absolute;left:677.30px;top:224.30px;width:0;height:9px"><div style="position:absolute;right:-0.3px;top:0;font:normal 7.4px/9px 'Liberation Sans',sans-serif;color:#222;white-space:nowrap;transform-origin:100% 0;transform:scaleX(0.9285);">50,000.00 $</div></div>
<div style="position:absolute;left:487.20px;top:245.50px;font:normal 8.2px/9px 'Liberation Sans',sans-serif;color:#333;white-space:nowrap;transform-origin:0 0;">Amount (inc. tax)</div>
<div style="position:absolute;left:676.10px;top:245.60px;width:0;height:9px"><div style="position:absolute;right:-0.3px;top:0;font:normal 7.4px/9px 'Liberation Sans',sans-serif;color:#222;white-space:nowrap;transform-origin:100% 0;transform:scaleX(0.9327);">200,000.00 $</div></div>
<div style="position:absolute;left:486px;top:260px;width:312px;height:26px;background:#e9edf0;border-top:2px solid #8a9c9c;border-bottom:1.5px solid #c2cccc"></div>
<div style="position:absolute;left:486px;top:305px;width:312px;height:18px;background:#f8f9fa"></div>
<div style="position:absolute;left:491.20px;top:268.70px;font:normal 8.2px/9px 'Liberation Sans',sans-serif;color:#222;white-space:nowrap;transform-origin:0 0;">Margins</div>
<div style="position:absolute;left:630.50px;top:268.70px;width:0;height:9px"><div style="position:absolute;right:-0.3px;top:0;font:normal 8.2px/9px 'Liberation Sans',sans-serif;color:#222;white-space:nowrap;transform-origin:100% 0;">Selling price</div></div>
<div style="position:absolute;left:687.30px;top:268.70px;width:0;height:9px"><div style="position:absolute;right:-0.3px;top:0;font:normal 8.2px/9px 'Liberation Sans',sans-serif;color:#222;white-space:nowrap;transform-origin:100% 0;">Cost price</div></div>
<div style="position:absolute;left:729.50px;top:268.70px;width:0;height:9px"><div style="position:absolute;right:-0.3px;top:0;font:normal 8.2px/9px 'Liberation Sans',sans-serif;color:#222;white-space:nowrap;transform-origin:100% 0;">Margin</div></div>
<div style="position:absolute;left:751.40px;top:268.70px;font:normal 8.2px/9px 'Liberation Sans',sans-serif;color:#222;white-space:nowrap;transform-origin:0 0;">Margin rate</div>
<div style="position:absolute;left:486px;top:304px;width:312px;height:1px;background:#e8eeee"></div>
<div style="position:absolute;left:486px;top:323px;width:312px;height:1px;background:#e8eeee"></div>
<div style="position:absolute;left:486px;top:342px;width:312px;height:1px;background:#cdd5d8"></div>
<div style="position:absolute;left:487.30px;top:290.60px;font:normal 8.2px/9px 'Liberation Sans',sans-serif;color:#222;white-space:nowrap;transform-origin:0 0;">Margin / Products</div>
<div style="position:absolute;left:630.50px;top:290.60px;width:0;height:9px"><div style="position:absolute;right:-0.3px;top:0;font:normal 8.2px/9px 'Liberation Sans',sans-serif;color:#222;white-space:nowrap;transform-origin:100% 0;">50.00</div></div>
<div style="position:absolute;left:687.30px;top:290.60px;width:0;height:9px"><div style="position:absolute;right:-0.3px;top:0;font:normal 8.2px/9px 'Liberation Sans',sans-serif;color:#222;white-space:nowrap;transform-origin:100% 0;">0.00</div></div>
<div style="position:absolute;left:729.50px;top:290.60px;width:0;height:9px"><div style="position:absolute;right:-0.3px;top:0;font:normal 8.2px/9px 'Liberation Sans',sans-serif;color:#222;white-space:nowrap;transform-origin:100% 0;">50.00</div></div>
<div style="position:absolute;left:487.30px;top:310.00px;font:normal 8.2px/9px 'Liberation Sans',sans-serif;color:#222;white-space:nowrap;transform-origin:0 0;">Margin / Services</div>
<div style="position:absolute;left:630.50px;top:310.00px;width:0;height:9px"><div style="position:absolute;right:-0.3px;top:0;font:normal 8.2px/9px 'Liberation Sans',sans-serif;color:#222;white-space:nowrap;transform-origin:100% 0;">0.00</div></div>
<div style="position:absolute;left:687.30px;top:310.00px;width:0;height:9px"><div style="position:absolute;right:-0.3px;top:0;font:normal 8.2px/9px 'Liberation Sans',sans-serif;color:#222;white-space:nowrap;transform-origin:100% 0;">0.00</div></div>
<div style="position:absolute;left:729.50px;top:310.00px;width:0;height:9px"><div style="position:absolute;right:-0.3px;top:0;font:normal 8.2px/9px 'Liberation Sans',sans-serif;color:#222;white-space:nowrap;transform-origin:100% 0;">0.00</div></div>
<div style="position:absolute;left:487.30px;top:328.50px;font:normal 8.2px/9px 'Liberation Sans',sans-serif;color:#6c38e6;white-space:nowrap;transform-origin:0 0;">Total Margin</div>
<div style="position:absolute;left:630.50px;top:328.50px;width:0;height:9px"><div style="position:absolute;right:-0.3px;top:0;font:normal 8.2px/9px 'Liberation Sans',sans-serif;color:#6c38e6;white-space:nowrap;transform-origin:100% 0;">50.00</div></div>
<div style="position:absolute;left:687.30px;top:328.50px;width:0;height:9px"><div style="position:absolute;right:-0.3px;top:0;font:normal 8.2px/9px 'Liberation Sans',sans-serif;color:#6c38e6;white-space:nowrap;transform-origin:100% 0;">0.00</div></div>
<div style="position:absolute;left:729.50px;top:328.50px;width:0;height:9px"><div style="position:absolute;right:-0.3px;top:0;font:normal 8.2px/9px 'Liberation Sans',sans-serif;color:#6c38e6;white-space:nowrap;transform-origin:100% 0;">50.00</div></div>
<div style="position:absolute;left:154px;top:418px;width:644px;height:29px;background:#e9edf0;border-top:1.5px solid #5f7474"></div>
<div style="position:absolute;left:174.50px;top:433.90px;font:normal 8.2px/9px 'Liberation Sans',sans-serif;color:#222;white-space:nowrap;transform-origin:0 0;">Description</div>
<div style="position:absolute;left:380.90px;top:433.80px;font:normal 8.2px/9px 'Liberation Sans',sans-serif;color:#222;white-space:nowrap;transform-origin:0 0;">Sales tax</div>
<div style="position:absolute;left:433.70px;top:433.80px;font:normal 8.2px/9px 'Liberation Sans',sans-serif;color:#222;white-space:nowrap;transform-origin:0 0;">U.P. (net)</div>
<div style="position:absolute;left:524.30px;top:428.20px;width:0;height:9px"><div style="position:absolute;right:-0.3px;top:0;font:normal 8.2px/9px 'Liberation Sans',sans-serif;color:#222;white-space:nowrap;transform-origin:100% 0;">U.P</div></div>
<div style="position:absolute;left:524.80px;top:437.50px;width:0;height:9px"><div style="position:absolute;right:-0.3px;top:0;font:normal 8.2px/9px 'Liberation Sans',sans-serif;color:#222;white-space:nowrap;transform-origin:100% 0;">(currency)</div></div>
<div style="position:absolute;left:534.70px;top:433.80px;font:normal 8.2px/9px 'Liberation Sans',sans-serif;color:#222;white-space:nowrap;transform-origin:0 0;">Qty</div>
<div style="position:absolute;left:558.20px;top:433.80px;font:normal 8.2px/9px 'Liberation Sans',sans-serif;color:#222;white-space:nowrap;transform-origin:0 0;">Reduc.</div>
<div style="position:absolute;left:599.90px;top:433.80px;font:normal 8.2px/9px 'Liberation Sans',sans-serif;color:#222;white-space:nowrap;transform-origin:0 0;">Cost price</div>
<div style="position:absolute;left:677.30px;top:428.30px;width:0;height:9px"><div style="position:absolute;right:-0.3px;top:0;font:normal 8.2px/9px 'Liberation Sans',sans-serif;color:#222;white-space:nowrap;transform-origin:100% 0;">Margin</div></div>
<div style="position:absolute;left:677.30px;top:437.40px;width:0;height:9px"><div style="position:absolute;right:-0.3px;top:0;font:normal 8.2px/9px 'Liberation Sans',sans-serif;color:#222;white-space:nowrap;transform-origin:100% 0;">rate</div></div>
<div style="position:absolute;left:707.50px;top:428.80px;width:0;height:9px"><div style="position:absolute;right:-0.3px;top:0;font:normal 8.2px/9px 'Liberation Sans',sans-serif;color:#222;white-space:nowrap;transform-origin:100% 0;">Total</div></div>
<div style="position:absolute;left:707.50px;top:438.00px;width:0;height:9px"><div style="position:absolute;right:-0.3px;top:0;font:normal 8.2px/9px 'Liberation Sans',sans-serif;color:#222;white-space:nowrap;transform-origin:100% 0;">(net)</div></div>
<div style="position:absolute;left:752.50px;top:423.70px;width:0;height:9px"><div style="position:absolute;right:-0.3px;top:0;font:normal 8.2px/9px 'Liberation Sans',sans-serif;color:#222;white-space:nowrap;transform-origin:100% 0;">Total (net</div></div>
<div style="position:absolute;left:752.50px;top:433.70px;width:0;height:9px"><div style="position:absolute;right:-0.3px;top:0;font:normal 8.2px/9px 'Liberation Sans',sans-serif;color:#222;white-space:nowrap;transform-origin:100% 0;">in</div></div>
<div style="position:absolute;left:752.50px;top:444.00px;width:0;height:9px"><div style="position:absolute;right:-0.3px;top:0;font:normal 8.2px/9px 'Liberation Sans',sans-serif;color:#222;white-space:nowrap;transform-origin:100% 0;">currency)</div></div>
<div style="position:absolute;left:0px;top:447px;width:820px;height:35px;background:#cbcbcb"></div>
<div style="position:absolute;left:0px;top:481px;width:820px;height:1px;background:#d6d6d6"></div>
</body></html>
